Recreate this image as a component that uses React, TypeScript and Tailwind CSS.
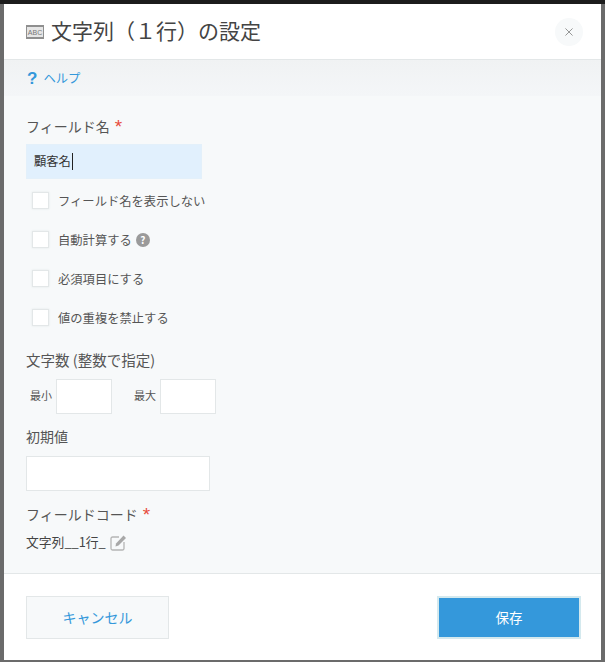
import React from "react";

const font = { fontFamily: '"Noto Sans CJK JP", "Liberation Sans", sans-serif' };

function Check({ label, extra }: { label: string; extra?: React.ReactNode }) {
  return (
    <div className="flex h-[39px] items-center pl-[6px]">
      <span className="h-[17px] w-[17px] border border-[#e3e7e8] bg-white shadow-[0_0_2px_#e3e7e8]" />
      <span className="ml-[9px] text-[12.3px] leading-[18px] text-[#555555]">{label}</span>
      {extra}
    </div>
  );
}

function Star() {
  return <span className="ml-[5px] text-[19px] leading-[22px] text-[#e74c3c] translate-y-[1px]" style={{ fontFamily: '"Liberation Sans", sans-serif' }}>*</span>;
}

export default function App() {
  return (
    <div style={font} className="flex h-[662px] w-[605px] flex-col overflow-hidden bg-[#6b6b6b]">
      <div className="h-[4px] shrink-0 bg-[#1c1c1c]" />
      <div className="ml-[4px] flex h-[656px] w-[597px] flex-col bg-white">
        <header className="flex h-[56px] shrink-0 items-center border-b border-[#e3e7e8] pl-[22px] pr-[18px]">
          <svg width="18" height="14" viewBox="0 0 18 14" className="mr-[7px]">
            <rect x="0.5" y="0.5" width="17" height="13" fill="#e6e6e6" stroke="#8f8f8f" />
            <rect x="0" y="0" width="18" height="2" fill="#8f8f8f" />
            <rect x="0" y="12" width="18" height="2" fill="#8f8f8f" />
            <text x="9" y="10" textAnchor="middle" fontSize="7" fill="#777" fontFamily="Liberation Sans">ABC</text>
          </svg>
          <h1 className="-translate-y-[2px] text-[21px] leading-[30px] text-[#444444]">文字列（１行）の設定</h1>
          <button className="ml-auto flex h-[28px] w-[28px] items-center justify-center rounded-full bg-[#f7f9fa]">
            <svg width="8" height="8" viewBox="0 0 9 9" stroke="#8a8a8a" strokeWidth="1">
              <path d="M0.5 0.5L8.5 8.5M8.5 0.5L0.5 8.5" />
            </svg>
          </button>
        </header>

        <div className="flex h-[36px] shrink-0 items-center bg-gradient-to-b from-[#f0f2f3] to-[#f4f6f8] pl-[23px]">
          <span className="text-[17px] font-bold leading-none text-[#3498db]" style={{ fontFamily: '"Liberation Sans", sans-serif' }}>?</span>
          <span className="ml-[6px] text-[12.3px] leading-none text-[#3498db]">ヘルプ</span>
        </div>

        <main className="flex h-[478px] shrink-0 flex-col border-b border-[#e3e7e8] bg-[#f7f9fa] pl-[22px] pt-[19px]">
          <div className="flex h-[22px] items-center text-[14px] text-[#555555]">
            フィールド名<Star />
          </div>
          <div className="mt-[7px] flex h-[35px] w-[176px] items-center border border-[#e3f0fa] bg-[#e1f0fd] pl-[7px] text-[12.3px] text-[#333333]">
            顧客名<span className="ml-px h-[17px] w-px bg-[#222222]" />
          </div>
          <div className="mt-[2px]">
            <Check label="フィールド名を表示しない" />
            <Check
              label="自動計算する"
              extra={
                <span className="ml-[4px] flex h-[14px] w-[14px] items-center justify-center rounded-full bg-[#9a9a9a] text-[10px] font-bold leading-none text-white">?</span>
              }
            />
            <Check label="必須項目にする" />
            <Check label="値の重複を禁止する" />
          </div>
          <div className="mt-[13px] flex h-[20px] items-center text-[14.5px] text-[#555555]">文字数 (整数で指定)</div>
          <div className="mt-[9px] flex items-center text-[11px] text-[#555555]">
            <span className="-translate-y-px ml-[4px] w-[26px]">最小</span>
            <span className="h-[35px] w-[56px] border border-[#e3e7e8] bg-white" />
            <span className="-translate-y-px ml-[22px] w-[26px]">最大</span>
            <span className="h-[35px] w-[56px] border border-[#e3e7e8] bg-white" />
          </div>
          <div className="mt-[12px] flex h-[20px] items-center text-[14px] text-[#555555]">初期値</div>
          <div className="mt-[10px] h-[35px] w-[184px] border border-[#e3e7e8] bg-white" />
          <div className="mt-[12px] flex h-[22px] items-center text-[14px] text-[#555555]">
            フィールドコード<Star />
          </div>
          <div className="mt-[7px] flex h-[20px] items-center text-[12.8px] text-[#444444]">
            文字列__1行_
            <svg width="17" height="17" viewBox="0 0 17 17" fill="none" className="ml-[4px]">
              <path d="M9 3H2.5A1.5 1.5 0 0 0 1 4.5v10A1.5 1.5 0 0 0 2.5 16h10a1.5 1.5 0 0 0 1.5-1.5V8" stroke="#b5b5b5" strokeWidth="1.3" />
              <path d="M6 9.5L13.5 1.5L16 4L8.5 11.5L5.5 12.5Z" fill="#a8a8a8" />
            </svg>
          </div>
        </main>

        <footer className="flex flex-1 items-start justify-between pl-[22px] pr-[20px] pt-[22px]">
          <button className="h-[43px] w-[143px] border border-[#e3e7e8] bg-[#f7f9fa] text-[14px] text-[#3498db]">キャンセル</button>
          <button className="h-[43px] w-[144px] border-2 border-[#d4e9ee] bg-[#3498db] text-[13.5px] text-white">保存</button>
        </footer>
      </div>
    </div>
  );
}
